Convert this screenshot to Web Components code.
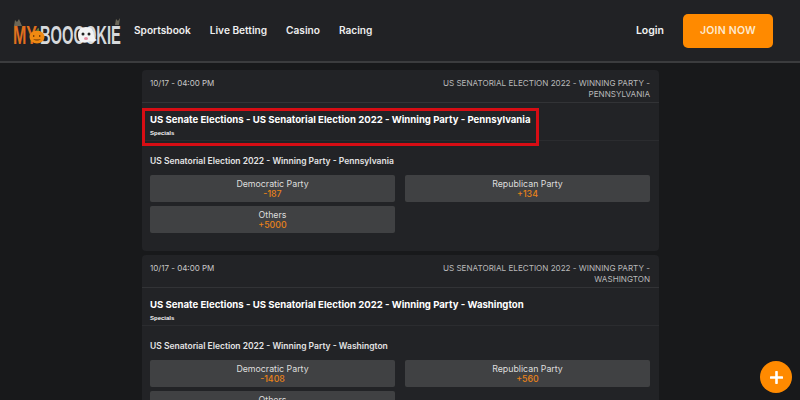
<!DOCTYPE html>
<html>
<head>
<meta charset="utf-8">
<style>
html,body{margin:0;height:400px;overflow:hidden;background:#18191b;}
body{font-family:Inter,"Open Sans",sans-serif;color:#fff;}
</style>
</head>
<body>
<site-header></site-header>
<main-column>
  <event-card date="10/17 - 04:00 PM" state="Pennsylvania" highlight></event-card>
  <event-card date="10/17 - 04:00 PM" state="Washington" dem="-1408" rep="+560"></event-card>
</main-column>
<fab-button></fab-button>

<script>
let headerTemplate = document.createElement("template");
headerTemplate.innerHTML = `
<style>
:host{display:flex;height:63px;box-sizing:border-box;align-items:center;background:#212225;border-bottom:2px solid #3b3c3e;padding:0 27px 0 11px;}
svg{display:block;flex:none;}
nav{display:flex;gap:19px;margin:0 0 1px 10px;font-size:10.15px;font-weight:600;color:#eee;}
.login{margin-left:auto;font-size:10.5px;font-weight:600;color:#f2f2f2;}
.join{margin-left:19px;width:90px;height:34px;display:flex;align-items:center;justify-content:center;background:#ff8a00;border-radius:5px;font-size:10.5px;font-weight:600;color:#fde9cf;letter-spacing:.2px;}
</style>
<svg width="113" height="36" viewBox="0 0 113 36">
  <path d="M3 13l1-6 2 2 2-3 3 7z" fill="#6b6657"/>
  <path d="M104 12l1-6 2 2 2-3-1 7z" fill="#6b6657"/>
  <text transform="translate(2 31) scale(.615 1)" font-family="Liberation Sans" font-weight="700" font-size="26" fill="#e0701e">MY</text>
  <text transform="translate(29 31) scale(.566 1)" font-family="Liberation Sans" font-weight="700" font-size="26" fill="#d6d9dc">BOOOOKIE</text>
  <ellipse cx="26" cy="24" rx="7.5" ry="6.5" fill="#f08a12"/>
  <path d="M22 22l2 1-2 1zM28 22l2 1-2 1zM22 26q4 3 8 0q-4 1-8 0z" fill="#5a2c05"/>
  <path d="M25 18q1-3 3-3v3z" fill="#6a7a2a"/>
  <path d="M70 29q-3-2-3-7 0-8 8-8t8 8q0 4 3 5-4 3-7 1-4 3-9 1z" fill="#f3f3f5"/>
  <circle cx="72" cy="21" r="1.5" fill="#222"/><circle cx="78" cy="21" r="1.5" fill="#222"/>
  <ellipse cx="75" cy="25.5" rx="2" ry="1.5" fill="#e88aa0"/>
</svg>
<nav><span>Sportsbook</span><span>Live Betting</span><span>Casino</span><span>Racing</span></nav>
<span class="login">Login</span>
<span class="join">JOIN NOW</span>
`;
class SiteHeader extends HTMLElement{
  constructor(){
    super();
    this.attachShadow({mode:"open"}).appendChild(headerTemplate.content.cloneNode(true));
  }
}
customElements.define("site-header",SiteHeader);

let columnTemplate = document.createElement("template");
columnTemplate.innerHTML = `
<style>
:host{display:flex;flex-direction:column;gap:4px;width:517px;margin:7px 0 0 142px;}
</style>
<slot></slot>
`;
class MainColumn extends HTMLElement{
  constructor(){
    super();
    this.attachShadow({mode:"open"}).appendChild(columnTemplate.content.cloneNode(true));
  }
}
customElements.define("main-column",MainColumn);

let cardTemplate = document.createElement("template");
cardTemplate.innerHTML = `
<style>
:host{display:block;position:relative;background:#222326;border-radius:4px;}
.top{display:flex;justify-content:space-between;height:33px;box-sizing:border-box;padding:8px 9px 0 8px;border-bottom:1px solid #323336;font-size:8.1px;line-height:11px;color:#b9b9ba;}
.date{color:#c8c8c8;font-size:8px;}
.market{width:230px;text-align:right;text-transform:uppercase;}
.title{padding:10px 8px 0;height:38px;box-sizing:border-box;border-bottom:1px solid #2b2c2f;}
h2{margin:0;font-size:9.6px;line-height:13px;font-weight:700;color:#fff;white-space:nowrap;}
small{display:block;margin-top:3px;font-family:"Liberation Sans",sans-serif;font-size:6px;line-height:8px;font-weight:700;color:#f2f2f2;}
.body{padding:14px 8px 18px;}
h3{margin:0 0 8px;font-size:8.5px;line-height:12px;font-weight:600;color:#e4e4e4;white-space:nowrap;}
.grid{display:grid;grid-template-columns:245px 245px;column-gap:10px;row-gap:4px;}
.mark{position:absolute;left:0;top:38px;width:397px;height:38px;box-sizing:border-box;border:3px solid #d70d14;}
</style>
<div class="top"><span class="date"></span><span class="market"></span></div>
<div class="title"><h2></h2><small>Specials</small></div>
<div class="body">
  <h3></h3>
  <div class="grid">
    <odds-button class="dem" label="Democratic Party"></odds-button>
    <odds-button class="rep" label="Republican Party"></odds-button>
    <odds-button class="oth" label="Others"></odds-button>
  </div>
</div>
`;
class EventCard extends HTMLElement{
  constructor(){
    super();
    var shadow = this.attachShadow({mode:"open"});
    shadow.appendChild(cardTemplate.content.cloneNode(true));
    var state = this.getAttribute("state");
    var name = "US Senatorial Election 2022 - Winning Party";
    shadow.querySelector(".date").textContent = this.getAttribute("date");
    shadow.querySelector(".market").textContent = name + " - " + state;
    shadow.querySelector("h2").textContent = "US Senate Elections - " + name + " - " + state;
    shadow.querySelector("h3").textContent = name + " - " + state;
    shadow.querySelector(".dem").setAttribute("price",this.getAttribute("dem") || "-187");
    shadow.querySelector(".rep").setAttribute("price",this.getAttribute("rep") || "+134");
    shadow.querySelector(".oth").setAttribute("price",this.getAttribute("oth") || "+5000");
    if(this.hasAttribute("highlight")){
      var mark = document.createElement("div");
      mark.className = "mark";
      shadow.appendChild(mark);
    }
  }
}

let oddsTemplate = document.createElement("template");
oddsTemplate.innerHTML = `
<style>
:host{display:flex;flex-direction:column;align-items:center;justify-content:center;height:27px;background:#404143;border-radius:2px;font-size:8.8px;line-height:10px;color:#dedede;}
b{font-weight:500;color:#e8821a;}
</style>
<span class="label"></span><b></b>
`;
class OddsButton extends HTMLElement{
  static get observedAttributes(){ return ["label","price"]; }
  constructor(){
    super();
    this.attachShadow({mode:"open"}).appendChild(oddsTemplate.content.cloneNode(true));
  }
  attributeChangedCallback(name,old,value){
    this.shadowRoot.querySelector(name == "label" ? ".label" : "b").textContent = value;
  }
}
customElements.define("odds-button",OddsButton);
customElements.define("event-card",EventCard);

let fabTemplate = document.createElement("template");
fabTemplate.innerHTML = `
<style>
:host{position:fixed;left:760px;top:361px;width:32px;height:32px;border-radius:50%;background:#ff8a00;display:flex;align-items:center;justify-content:center;}
svg{display:block;}
</style>
<svg width="13" height="13" viewBox="0 0 13 13"><path d="M6.5 1v11M1 6.5h11" stroke="#fff" stroke-width="2.6" stroke-linecap="round"/></svg>
`;
class FabButton extends HTMLElement{
  constructor(){
    super();
    this.attachShadow({mode:"open"}).appendChild(fabTemplate.content.cloneNode(true));
  }
}
customElements.define("fab-button",FabButton);
</script>
</body>
</html>
